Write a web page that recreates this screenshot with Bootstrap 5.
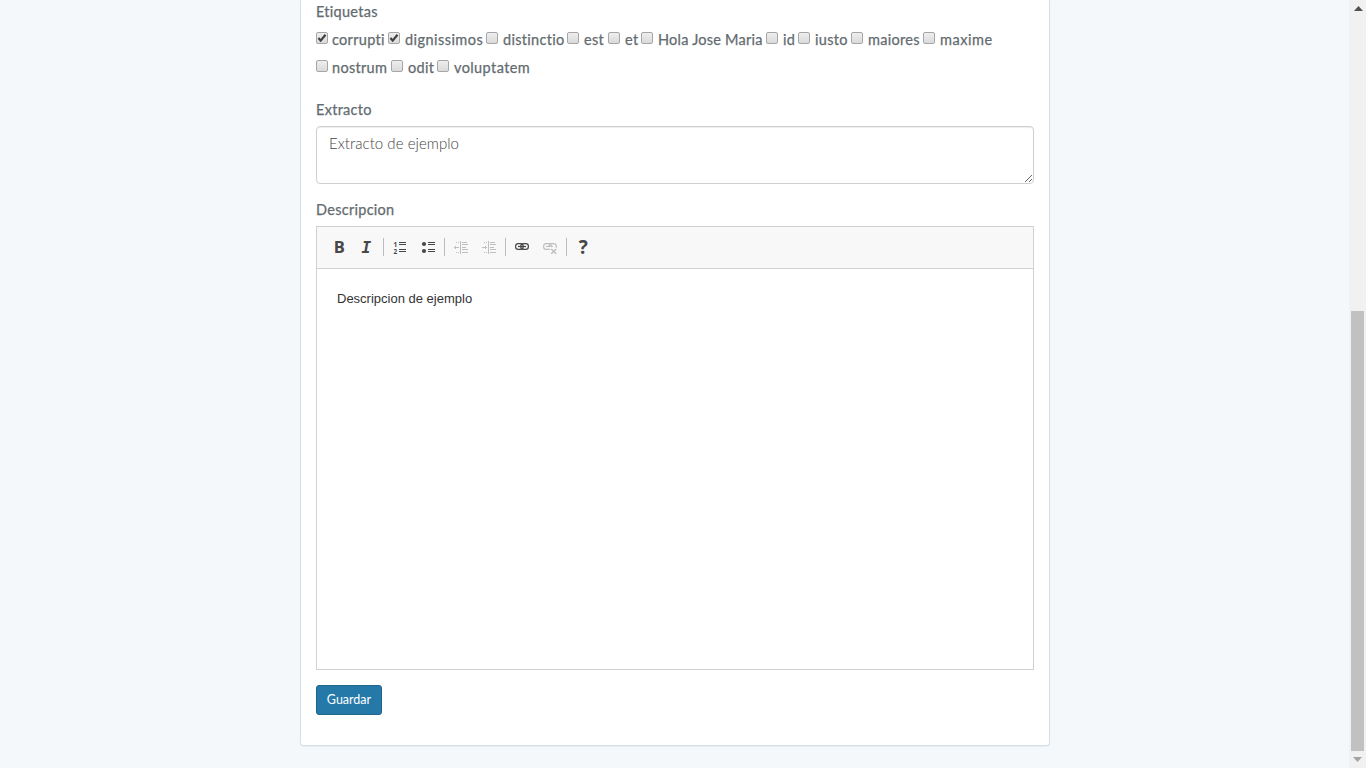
<!DOCTYPE html>
<html lang="es">
<head>
<meta charset="utf-8">
<meta name="viewport" content="width=device-width, initial-scale=1">
<title>Editar entrada</title>
<link href="https://cdn.jsdelivr.net/npm/bootstrap@5.3.0/dist/css/bootstrap.min.css" rel="stylesheet">
<style>
body{background:#f5f8fa;color:#636b6f;font:14px/22px Lato,"Liberation Sans",sans-serif;height:768px}
.panel{width:750px;height:746px;margin-left:300px;padding:1px 15px 0;background:#fff;border:1px solid #d3e0e9;border-top:0;border-radius:0 0 4px 4px;box-shadow:0 1px 1px rgba(0,0,0,.05)}
.caption{font-size:14.5px;font-weight:400;letter-spacing:.28px;height:22px;line-height:22px;-webkit-text-stroke:.25px #636b6f}
.field{margin:15px 0 5px}
.field.first-field{margin-top:17px}
.tagbox{padding-top:3px}
.tags{height:28px;font-size:14.5px;font-weight:400;-webkit-text-stroke:.25px #636b6f}
.tag{display:flex;flex:none;width:var(--w);letter-spacing:var(--s,.3px);white-space:nowrap;line-height:28px}
.tag input{appearance:none;flex:none;width:12px;height:12px;margin:6px 5px 0 0;border:1px solid #a6a6a6;border-radius:2px;background:linear-gradient(#eee,#dadada)}
.tag.w1 input,.tag.first-in-row input{margin-right:4px}
.tag input:checked{background:url("data:image/svg+xml,%3Csvg xmlns='http://www.w3.org/2000/svg' viewBox='0 0 10 10'%3E%3Cpath d='M1.5 5l2.2 2.6L8.5 1.8' fill='none' stroke='%23404040' stroke-width='2.2'/%3E%3C/svg%3E"),linear-gradient(#eee,#dadada)}
.w1{--w:72px}.w2{--w:98px;--s:.45px}.w3{--w:81px}.w4{--w:41px}.w5{--w:33px}.w6{--w:125px;--s:.24px}.w7{--w:32px}.w8{--w:53px}.w9{--w:72px}.w10{--w:75px;--s:.55px}.w11{--w:75px}.w12{--w:46px}.w13{--w:96px;--s:.4px}
.excerpt.form-control{height:58px;min-height:0;padding:5px 12px 6px;border:1px solid #ccd0d2;border-radius:4px;font-size:15px;line-height:22px;font-weight:300;color:#444;letter-spacing:.05px;box-shadow:inset 0 1px 1px rgba(0,0,0,.075)}
.editor{height:444px;border:1px solid #d1d1d1}
.tools{height:42px;background:#f8f8f8;border-bottom:1px solid #d1d1d1}
.tools svg{display:block}
.content{padding:20px;font:13px/20px "Liberation Sans",sans-serif;color:#333}
.save.btn{width:66px;height:30px;margin-top:15px;padding:0;background:#2579a9;border:1px solid #1f648b;border-radius:3px;color:#fff;font-size:12.5px;line-height:18px}
.scroller{width:17px;height:768px;background:#f1f1f1}
.thumb{height:440px;margin:0 2px;background:#c1c1c1}
</style>
</head>
<body class="d-flex justify-content-between overflow-hidden">
<main class="panel">
  <div class="caption">Etiquetas</div>
  <div class="tagbox">
    <div class="tags d-flex">
      <label class="tag w1"><input type="checkbox" checked>corrupti</label><label class="tag w2"><input type="checkbox" checked>dignissimos</label><label class="tag w3"><input type="checkbox">distinctio</label><label class="tag w4"><input type="checkbox">est</label><label class="tag w5"><input type="checkbox">et</label><label class="tag w6"><input type="checkbox">Hola Jose Maria</label><label class="tag w7"><input type="checkbox">id</label><label class="tag w8"><input type="checkbox">iusto</label><label class="tag w9"><input type="checkbox">maiores</label><label class="tag w10"><input type="checkbox">maxime</label>
    </div>
    <div class="tags d-flex">
      <label class="tag w11 first-in-row"><input type="checkbox">nostrum</label><label class="tag w12"><input type="checkbox">odit</label><label class="tag w13"><input type="checkbox">voluptatem</label>
    </div>
  </div>
  <div class="caption field first-field">Extracto</div>
  <textarea class="form-control excerpt d-block">Extracto de ejemplo</textarea>
  <div class="caption field">Descripcion</div>
  <section class="editor">
    <div class="tools">
      <svg width="290" height="41" viewBox="317 227 290 41" fill="none" stroke="#474747" shape-rendering="crispEdges">
        <g fill="#474747" stroke="none" font-family="Open Sans" font-weight="700">
          <text x="333.7" y="252.7" font-size="16.5">B</text>
          <text x="361.5" y="252.7" font-family="DejaVu Sans Mono" font-style="italic" font-size="16">I</text>
          <text x="578.7" y="253.7" font-size="19">?</text>
          <text x="393.6" y="246.8" font-size="6.5">1</text><text x="393.6" y="254.3" font-size="6.5">2</text>
        </g>
        <path stroke="#bcbcbc" d="M383.5 238v18M444.5 238v18M505.5 238v18M566.5 238v18"/>
        <path d="M399 242.5h7M399 244.5h7M399 249.5h7M399 251.5h7M428 242.5h7M428 244.5h7M428 249.5h7M428 251.5h7"/>
        <g fill="#474747" stroke="none" shape-rendering="auto"><circle cx="424" cy="244" r="2.1"/><circle cx="424" cy="251" r="2.1"/></g>
        <g stroke="#bfbfbf"><path d="M460.5 241v13M462 242.5h5M462 244.5h6M462 247.5h4M462 249.5h6M462 252.5h6M456 242.5h1M458 242.5h1M456 252.5h1M458 252.5h1M454 247.5h5M455.5 246v3"/></g>
        <g stroke="#bfbfbf"><path d="M488.5 241v13M490 242.5h5M490 244.5h6M490 247.5h4M490 249.5h6M490 252.5h6M484 242.5h1M486 242.5h1M484 252.5h1M486 252.5h1M482 247.5h5M485.5 246v3"/></g>
        <g shape-rendering="auto" stroke-width="1.2"><rect x="515.6" y="243.6" width="7.6" height="5.8" rx="2.7"/><rect x="520.8" y="243.6" width="7.6" height="5.8" rx="2.7"/><path d="M518 246.5h8"/></g>
        <g shape-rendering="auto" stroke="#bfbfbf" stroke-width="1.2"><path d="M550 249.4h-4q-2.4 0-2.4-2.9t2.4-2.9h3q2.3 0 2.3 2.9M549 246.5q0-2.9 2.4-2.9h2.5q2.4 0 2.4 2.9v1.3M546 246.5h7"/><path stroke-width="1.5" d="M551.2 249l5 4.8M556.2 249l-5 4.8"/></g>
      </svg>
    </div>
    <div class="content">Descripcion de ejemplo</div>
  </section>
  <button class="btn save d-block">Guardar</button>
</main>
<div class="scroller d-flex flex-column">
  <svg width="17" height="311"><path d="M5 11h9L9.5 6z" fill="#505050"/></svg>
  <div class="thumb"></div>
  <svg width="17" height="17"><path d="M4 6h9L8.5 11z" fill="#a3a3a3"/></svg>
</div>
</body>
</html>
